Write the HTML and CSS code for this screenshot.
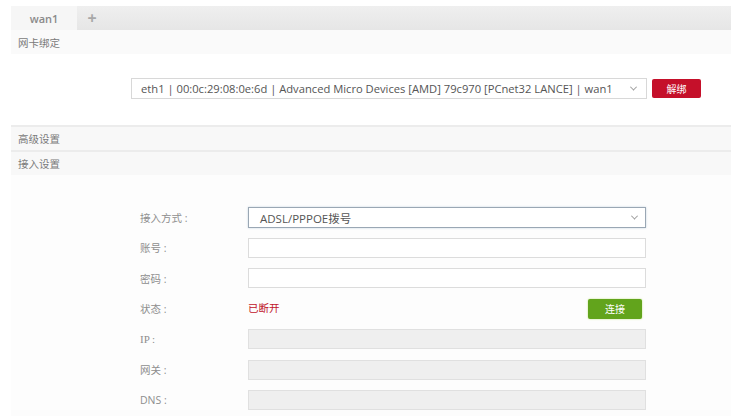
FILE: index.html
```
<!DOCTYPE html>
<html lang="zh-CN">
<head>
<meta charset="utf-8">
<link rel="stylesheet" href="styles.css">
</head>
<body>
<div class="panel">
  <div class="tabs">
    <div class="tab active">wan1</div>
    <div class="tab-add">+</div>
  </div>
  <div class="section-title plain">网卡绑定</div>
  <div class="bind-row">
    <div class="select wide"><span>eth1 | 00:0c:29:08:0e:6d | Advanced Micro Devices [AMD] 79c970 [PCnet32 LANCE] | wan1</span><span class="caret"></span></div>
    <div class="btn red">解绑</div>
  </div>
  <div class="section-title">高级设置</div>
  <div class="section-title">接入设置</div>
  <div class="form">
    <div class="label">接入方式 :</div>
    <div class="select focus"><span>ADSL/PPPOE拨号</span><span class="caret"></span></div>
    <div class="label">账号 :</div>
    <div class="input"></div>
    <div class="label">密码 :</div>
    <div class="input"></div>
    <div class="label">状态 :</div>
    <div class="status-row"><span class="status">已断开</span><div class="btn green">连接</div></div>
    <div class="label serif">IP :</div>
    <div class="input disabled"></div>
    <div class="label">网关 :</div>
    <div class="input disabled"></div>
    <div class="label">DNS :</div>
    <div class="input disabled"></div>
  </div>
</div>
</body>
</html>
```
FILE: styles.css
```
* { box-sizing: border-box; }
body {
  margin: 0;
  background: #fff;
  font-family: "Open Sans", "Noto Sans CJK SC", sans-serif;
  color: #666;
}
.panel {
  margin: 6px 0 0 11px;
  width: 720px;
  background: #fcfcfc;
  height: 410px;
}
.tabs {
  display: flex;
  height: 24px;
  background: linear-gradient(#efefef, #e6e6e6);
  align-items: stretch;
}
.tab {
  width: 66px;
  display: flex;
  align-items: center;
  justify-content: center;
  font-size: 11px;
  font-weight: 600;
  color: #8a8a8a;
}
.tab.active { background: #f6f6f6; }
.tab-add {
  width: 30px;
  display: flex;
  align-items: center;
  justify-content: center;
  font-size: 16px;
  font-weight: 700;
  color: #a8a8a8;
}
.section-title {
  height: 25px;
  padding-left: 7px;
  display: flex;
  align-items: center;
  font-size: 10.5px;
  color: #7a7a7a;
  background: #f8f8f8;
  border-top: 2px solid #ececec;
}
.section-title.plain {
  border-top: none;
  height: 24px;
  background: #fafafa;
}
.bind-row {
  display: flex;
  gap: 5px;
  padding: 24px 0 0 120px;
  height: 71px;
  align-items: flex-start;
  background: #fff;
}
.select {
  height: 21px;
  border: 1px solid #d8d8d8;
  background: #fff;
  display: flex;
  align-items: center;
  justify-content: space-between;
  padding: 0 8px 0 9px;
  font-size: 11.5px;
  color: #555;
  white-space: nowrap;
}
.select.wide { width: 516px; padding-right: 10px; font-size: 11.2px; }
.select.focus {
  border: 1px solid #9aa7b4;
  box-shadow: 0 0 2px #c8d6e2;
  padding-left: 11px;
}
.caret {
  width: 5px;
  height: 5px;
  border-right: 1.5px solid #999;
  border-bottom: 1.5px solid #999;
  transform: rotate(45deg) translate(-1px, -1px);
}
.btn {
  height: 19px;
  display: flex;
  align-items: center;
  justify-content: center;
  color: #fff;
  font-size: 10px;
  border-radius: 2px;
}
.btn.red {
  width: 49px;
  margin-top: 1px;
  background: #c5102a;
}
.btn.green {
  width: 54px;
  height: 20px;
  background: #62a41c;
  box-shadow: 0 0 2px #b9e07a;
}
.form {
  display: grid;
  grid-template-columns: 108px 398px;
  grid-auto-rows: 20px;
  row-gap: 10.5px;
  padding: 32px 0 0 129px;
  background: #fdfdfd;
}
.form .select { height: 21px; }
.label {
  display: flex;
  align-items: center;
  font-size: 10.5px;
  color: #8e8e8e;
}
.label.serif { font-family: "Liberation Serif", serif; font-size: 11px; }
.input {
  height: 20px;
  border: 1px solid #dcdcdc;
  background: #fff;
}
.input.disabled {
  background: #efefef;
  border-color: #e0e0e0;
}
.status-row {
  display: flex;
  align-items: center;
  justify-content: space-between;
  padding-right: 4px;
}
.status {
  font-size: 10.5px;
  color: #c0142a;
  margin-top: -2px;
}
```
